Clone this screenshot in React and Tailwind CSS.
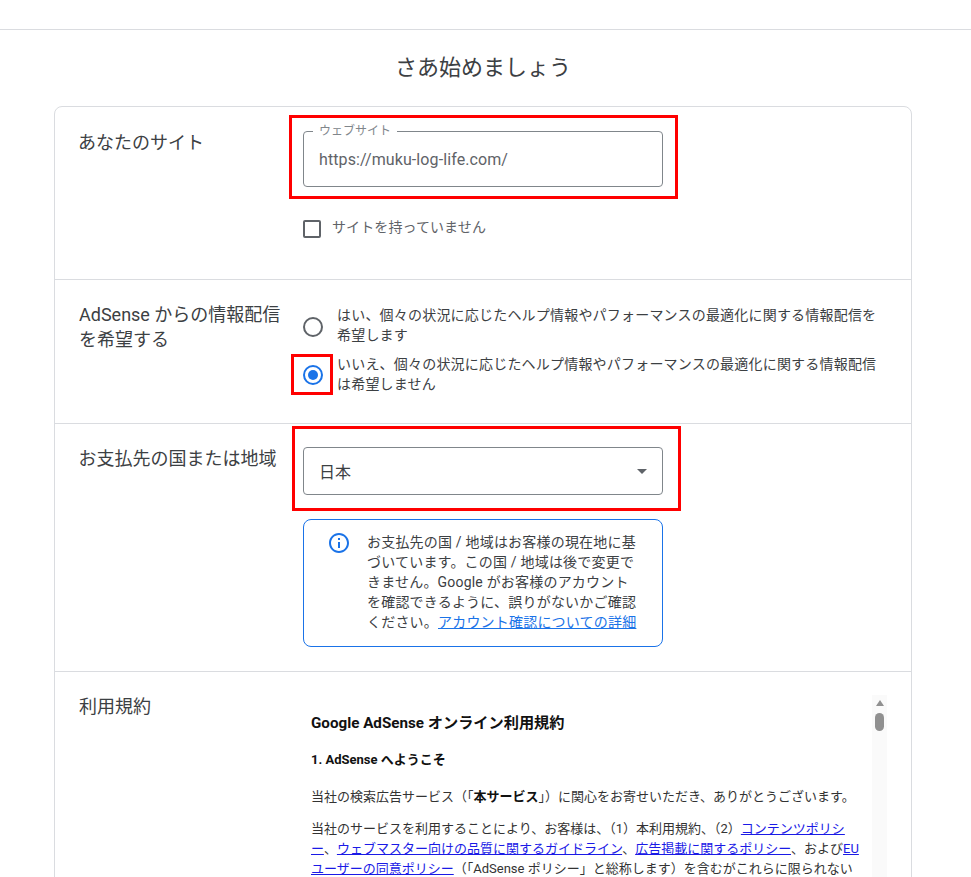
import React from 'react';

const FONT = "font-['Roboto','Noto_Sans_CJK_JP',sans-serif]";
const LINK = 'text-[#1a1ae6] underline';

function RedBox({ className }) {
  return <div className={`absolute border-[3px] border-[#ff0000] pointer-events-none ${className}`} />;
}

function Radio({ checked }) {
  return (
    <div className={`w-5 h-5 rounded-full border-2 flex items-center justify-center shrink-0 ${checked ? 'border-[#1a73e8]' : 'border-[#5f6368]'}`}>
      {checked && <div className="w-2.5 h-2.5 rounded-full bg-[#1a73e8]" />}
    </div>
  );
}

function Section({ label, labelClass = 'w-[224px]', children, className = '' }) {
  return (
    <section className={`flex border-b border-[#dadce0] px-6 ${className}`}>
      <h2 className={`shrink-0 pr-4 text-[18px] leading-[25px] text-[#3c4043] font-normal ${labelClass}`}>{label}</h2>
      <div className="flex-1 min-w-0">{children}</div>
    </section>
  );
}

export default function App() {
  return (
    <div lang="ja" className={`${FONT} h-screen overflow-hidden bg-white`}>
      <div className="h-[30px] border-b border-[#dadce0]" />

      <div className="mx-[54px] w-[858px]">
        <h1 className="h-[76px] pt-[21px] text-center text-[22px] leading-[34px] font-normal text-[#3c4043]">さあ始めましょう</h1>

        <div className="rounded-t-lg border border-[#dadce0]">
          {/* Site */}
          <Section label="あなたのサイト" labelClass="w-[225px] -ml-px mt-px" className="h-[173px] pt-[22px]">
            <div className="relative w-[360px] mt-[2px]">
              <RedBox className="-left-[14px] -top-[16px] w-[389px] h-[84px]" />
              <div className="relative h-[56px] rounded border border-[#80868b] flex items-center pl-[15px] pt-[2px] text-[16px] tracking-[0.1px] text-[#5f6368]">
                <span className="absolute left-[9px] -top-[8px] bg-white px-[6px] text-[12px] leading-[14px] tracking-normal text-[#80868b]">ウェブサイト</span>
                https://muku-log-life.com/
              </div>
            </div>
            <label className="flex items-start mt-[33px] text-[14px] leading-[18px] tracking-[0.1px] text-[#5f6368]">
              <span className="w-[18px] h-[18px] rounded-[2px] border-2 border-[#5f6368] mr-[11px] shrink-0" />
              <span className="-mt-[2px]">サイトを持っていません</span>
            </label>
          </Section>

          {/* Emails */}
          <Section label="AdSense からの情報配信を希望する" labelClass="w-[224px] -mt-[3px]" className="h-[144px] pt-[25px]">
            <div className="flex items-center">
              <div className="w-[34px] shrink-0 mt-[4px]"><Radio /></div>
              <p className="text-[14px] leading-[20px] tracking-[0.2px] text-[#3c4043] w-[550px]">はい、個々の状況に応じたヘルプ情報やパフォーマンスの最適化に関する情報配信を希望します</p>
            </div>
            <div className="flex items-center mt-[9px]">
              <div className="relative w-[34px] shrink-0 mt-[2px]">
                <RedBox className="-left-[12px] -top-[11px] w-[42px] h-[41px]" />
                <Radio checked />
              </div>
              <p className="text-[14px] leading-[20px] tracking-[0.2px] text-[#3c4043] w-[550px]">いいえ、個々の状況に応じたヘルプ情報やパフォーマンスの最適化に関する情報配信は希望しません</p>
            </div>
          </Section>

          {/* Country */}
          <Section label="お支払先の国または地域" labelClass="w-[224.5px] -ml-[0.5px] mt-px" className="h-[248px] pt-[21px]">
            <div className="relative w-[360px] mt-[2px]">
              <RedBox className="-left-[11px] -top-[21px] w-[389px] h-[85px]" />
              <div className="h-[48px] rounded border border-[#80868b] flex items-center justify-between pl-[15px] pr-[15px] text-[16px] text-[#3c4043]">
                <span className="mt-[3px]">日本</span>
                <span className="w-0 h-0 border-x-[5px] border-x-transparent border-t-[5px] border-t-[#5f6368]" />
              </div>
            </div>
            <div className="mt-6 w-[360px] h-[128px] rounded-lg border border-[#1a73e8] flex pl-[23px] pt-[11px]">
              <svg className="w-6 h-6 shrink-0 mr-[16px]" viewBox="0 0 24 24" fill="#1a73e8">
                <path d="M11 7h2v2h-2zm0 4h2v6h-2zm1-9C6.48 2 2 6.48 2 12s4.48 10 10 10 10-4.48 10-10S17.52 2 12 2zm0 18c-4.41 0-8-3.59-8-8s3.59-8 8-8 8 3.59 8 8-3.59 8-8 8z" />
              </svg>
              <p className="w-[272px] mt-px text-[14px] leading-[20px] tracking-[0.2px] text-[#3c4043]">
                お支払先の国 / 地域はお客様の現在地に基づいています。この国 / 地域は後で変更できません。Google がお客様のアカウントを確認できるように、誤りがないかご確認ください。<a className="text-[#1a73e8] underline" href="#">アカウント確認についての詳細</a>
              </p>
            </div>
          </Section>

          {/* Terms */}
          <Section label="利用規約" className="h-[400px] pt-[22px] border-b-0">
            <div className="flex h-[360px] w-[584px] mt-px">
              <div className="w-[569px] pl-2 pr-3 pt-[18px] text-[13px] leading-[20px] text-[#333]">
                <h3 className="text-[15.2px] leading-[20px] font-bold text-[#111]">Google AdSense オンライン利用規約</h3>
                <h4 className="mt-[17px] text-[13px] leading-[20px] font-bold text-[#111]">1. AdSense へようこそ</h4>
                <p className="mt-[17px]">当社の検索広告サービス（「<b className="text-[#111]">本サービス</b>」）に関心をお寄せいただき、ありがとうございます。</p>
                <p className="mt-3">
                  当社のサービスを利用することにより、お客様は、（1）本利用規約、（2）<a className={LINK} href="#">コンテンツポリシー</a>、<a className={LINK} href="#">ウェブマスター向けの品質に関するガイドライン</a>、<a className={LINK} href="#">広告掲載に関するポリシー</a>、および<a className={LINK} href="#">EU ユーザーの同意ポリシー</a>（「AdSense ポリシー」と総称します）を含むがこれらに限られない
                </p>
              </div>
              <div className="w-[15px] bg-[#fafafa] flex flex-col items-center pt-[5px]">
                <span className="w-0 h-0 border-x-[4.5px] border-x-transparent border-b-[6px] border-b-[#909090]" />
                <span className="mt-[7px] w-[9px] h-[18px] rounded-full bg-[#909090]" />
              </div>
            </div>
          </Section>
        </div>
      </div>
    </div>
  );
}
